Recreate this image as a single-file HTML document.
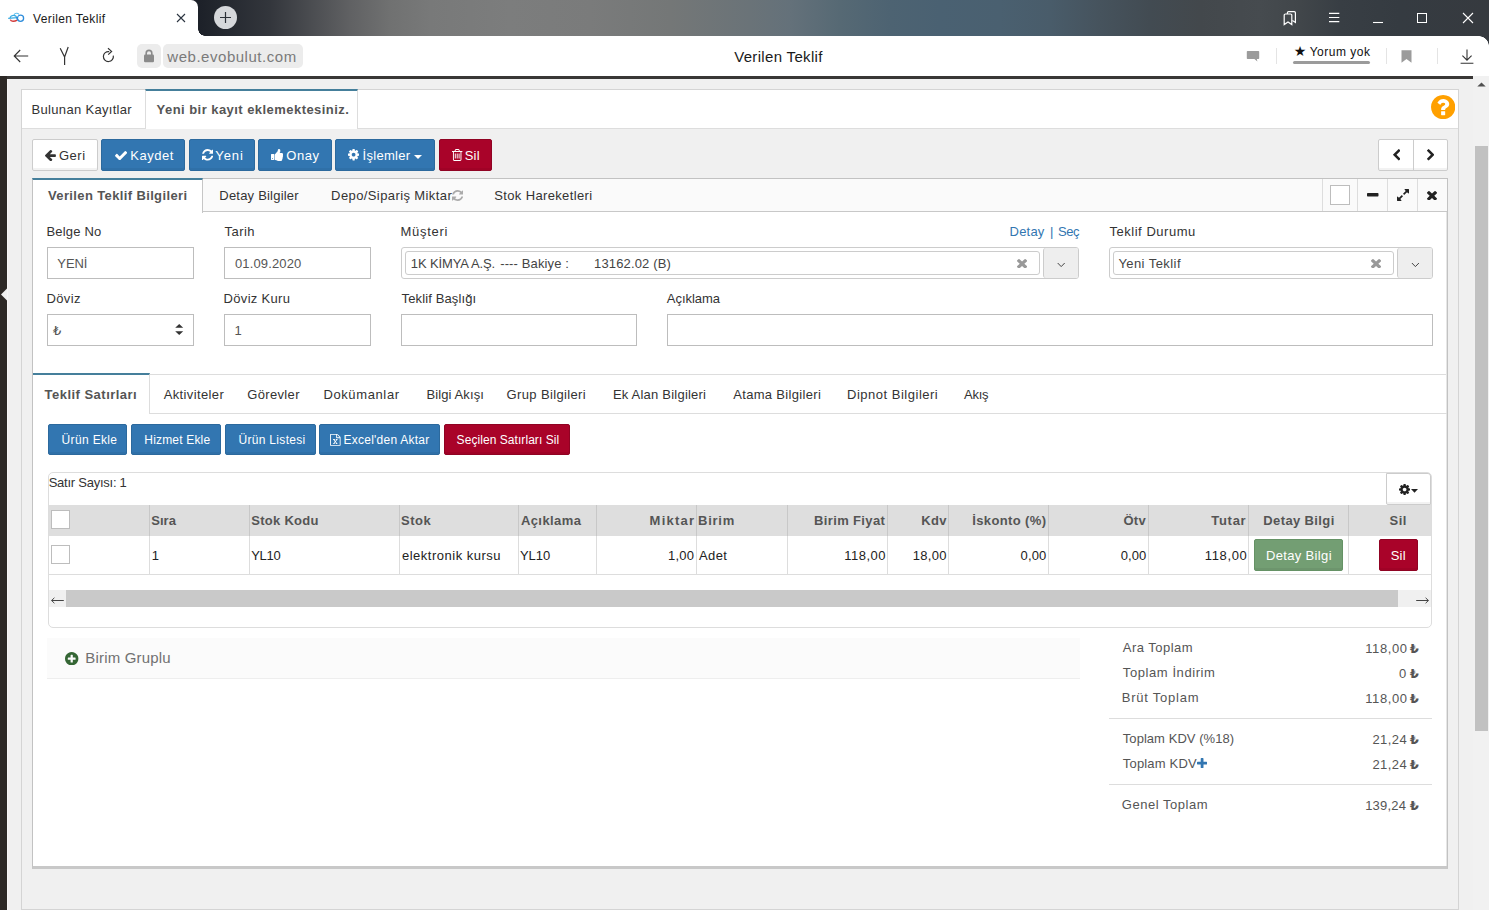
<!DOCTYPE html>
<html lang="tr">
<head>
<meta charset="utf-8">
<title>Verilen Teklif</title>
<style>
*{box-sizing:border-box;margin:0;padding:0}
html,body{width:1489px;height:910px;overflow:hidden}
body{position:relative;font-family:"Liberation Sans","DejaVu Sans",sans-serif;font-size:13px;color:#333;background:#f0f0f0}
.abs{position:absolute}
svg{display:block}
.t{position:absolute;white-space:nowrap;line-height:1}
#titlebar{left:0;top:0;width:1489px;height:36px;background:linear-gradient(90deg,#1d2129 0,#1d2129 200px,#262a31 230px,#33363c 270px,#4a4c50 310px,#606163 350px,#707171 390px,#787979 430px,#7c7d7d 510px,#7a7b7b 590px,#747777 670px,#6a7378 750px,#64717a 790px,#566974 840px,#4d6372 890px,#4a6172 940px,#4a6070 1000px,#495c6a 1050px,#46535d 1100px,#424b52 1150px,#43484c 1200px,#464b4f 1260px,#41464a 1300px,#383e44 1340px,#353b41 1400px,#363a3f 1489px)}
#tab{left:0;top:0;width:198px;height:36px;background:#fff;border-radius:0 7px 0 0}
#tabcurve{left:198px;top:29px;width:7px;height:7px;background:radial-gradient(circle at 100% 0,rgba(255,255,255,0) 6.5px,#fff 7px)}
#addr{left:0;top:36px;width:1489px;height:40px;background:#fff}
#addrcorner{left:1479px;top:36px;width:10px;height:10px;background:radial-gradient(circle at 0 100%,rgba(255,255,255,0) 9.5px,#363a3f 10px)}
.btn{position:absolute;border-radius:2px;box-shadow:inset 0 -2px 0 rgba(0,0,0,0.05)}
.blue{background:#3276b1;border:1px solid #2c699d}
.red{background:#a90329;border:1px solid #900323}
.white{background:#fff;border:1px solid #ccc}
.inp{position:absolute;border:1px solid #bdbdbd;background:#fff}
.sel{position:absolute;border:1px solid #ccc;background:#fff;border-radius:3px}
.th{position:absolute;top:505px;height:31px;background:#dedede;border-left:1px solid #c9c9c9}
.td{position:absolute;top:536px;height:39px;border-left:1px solid #ddd;border-bottom:1px solid #ddd}
.cb{position:absolute;width:19px;height:19px;border:1px solid #bdbdbd;background:#fff}
</style>
</head>
<body>
<div class="abs" id="titlebar"></div><div class="abs" id="tab"></div><div class="abs" id="tabcurve"></div><div class="abs" id="addr"></div><div class="abs" id="addrcorner"></div>
<svg class="abs" style="left:8px;top:11px" width="17" height="13" viewBox="0 0 17 13">
<path d="M6.2 3.9 C6.8 1.9 9.8 1.7 10.9 3.4" fill="none" stroke="#62c0ee" stroke-width="1.1"/>
<path d="M2.3 8.6 C2.9 10.8 6.4 10.7 9.2 9.2" fill="none" stroke="#d23b3b" stroke-width="1.4"/>
<path d="M0.2 7.3 L8.6 6.7 C8.2 4 3.4 3.2 2 6.6" fill="none" stroke="#3aace3" stroke-width="1.2"/>
<ellipse cx="12.5" cy="7.3" rx="3.1" ry="3.1" fill="none" stroke="#2f8ddb" stroke-width="1.3"/>
<path d="M8.4 6.2 C9 7.6 9.6 8.6 10.4 9.4" fill="none" stroke="#2f8ddb" stroke-width="1.1"/>
</svg>
<div class="t" style="left:33.0px;top:13px;font-size:12px;color:#1a1a1a;letter-spacing:0.38px;">Verilen Teklif</div>
<svg class="abs" style="left:176px;top:13px" width="10" height="10" viewBox="0 0 10 10"><path d="M1 1L9 9M9 1L1 9" stroke="#2b3440" stroke-width="1.1" fill="none"/></svg>
<div class="abs" style="left:214px;top:6px;width:23px;height:23px;border-radius:50%;background:#d6d8db"></div>
<svg class="abs" style="left:219px;top:11px" width="13" height="13" viewBox="0 0 13 13"><path d="M6.5 1V12M1 6.5H12" stroke="#2b3038" stroke-width="1.2" fill="none"/></svg>
<svg class="abs" style="left:1282px;top:10px" width="16" height="17" viewBox="0 0 16 17"><path d="M2.2 14.6V5.2a1.2 1.2 0 0 1 1.2-1.2h5.2a1.2 1.2 0 0 1 1.2 1.2v9.4l-3.8-2.6z" fill="none" stroke="#fff" stroke-width="1.2"/><path d="M5.4 4V2.8a1.2 1.2 0 0 1 1.2-1.2h5.6a1.2 1.2 0 0 1 1.2 1.2v9.6l-3-2" fill="none" stroke="#fff" stroke-width="1.2"/></svg>
<svg class="abs" style="left:1328px;top:11px" width="12" height="13" viewBox="0 0 12 13"><path d="M1 2.3H11.3M1 6.5H11.3M1 10.7H11.3" stroke="#fff" stroke-width="1.2"/></svg>
<svg class="abs" style="left:1372px;top:21px" width="12" height="3" viewBox="0 0 12 3"><path d="M1 1.5H11" stroke="#fff" stroke-width="1.1"/></svg>
<svg class="abs" style="left:1416px;top:12px" width="12" height="12" viewBox="0 0 12 12"><rect x="1.5" y="1.5" width="9" height="9" fill="none" stroke="#fff" stroke-width="1"/></svg>
<svg class="abs" style="left:1462px;top:12px" width="12" height="12" viewBox="0 0 12 12"><path d="M1 1L11 11M11 1L1 11" stroke="#fff" stroke-width="1.1"/></svg>
<svg class="abs" style="left:13px;top:49px" width="16" height="14" viewBox="0 0 16 14"><path d="M1.2 7H15.2M7.2 1L1.2 7L7.2 13" stroke="#333" stroke-width="1.1" fill="none"/></svg>
<svg class="abs" style="left:59px;top:46px" width="12" height="20" viewBox="0 0 12 20"><path d="M1.2 2.2L5.6 11L9.2 1M5.6 11V19" stroke="#333" stroke-width="1.2" fill="none"/></svg>
<svg class="abs" style="left:101px;top:47px" width="15" height="17" viewBox="0 0 15 17"><path d="M8.2 4.6A5 5 0 1 0 12.3 8.6" stroke="#333" stroke-width="1.2" fill="none"/><path d="M7 1.2L10.6 4.4L7.2 7.6" stroke="#333" stroke-width="1.2" fill="none"/></svg>
<div class="abs" style="left:137px;top:44px;width:24px;height:24px;border-radius:5px;background:#ececec"></div>
<svg class="abs" style="left:143px;top:49px" width="12" height="14" viewBox="0 0 12 14"><path d="M3.2 6V4.2a2.8 2.8 0 0 1 5.6 0V6" fill="none" stroke="#8a8a8a" stroke-width="1.6"/><rect x="1" y="5.6" width="10" height="7.6" rx="1.2" fill="#8a8a8a"/></svg>
<div class="abs" style="left:163px;top:44px;width:140px;height:24px;border-radius:5px;background:#ececec"></div>
<div class="t" style="left:167.3px;top:49px;font-size:15px;color:#7a7a7a;letter-spacing:0.53px;">web.evobulut.com</div>
<div class="t" style="left:734.2px;top:49px;font-size:15px;color:#1a1a1a;letter-spacing:0.33px;">Verilen Teklif</div>
<svg class="abs" style="left:1246px;top:50px" width="14" height="13" viewBox="0 0 14 13"><path d="M1.6 1h10.8a0.8 0.8 0 0 1 .8.8v6.4a0.8 0.8 0 0 1 -.8.8h-1.6l0.6 2.6l-3-2.6h-6.8a0.8 0.8 0 0 1 -.8-.8v-6.4a0.8 0.8 0 0 1 .8-.8z" fill="#9b9b9b"/></svg>
<div class="abs" style="left:1276px;top:48px;width:1px;height:16px;background:#e4e4e4"></div>
<div class="t" style="left:1293.7px;top:44px;font-size:14px;color:#111;letter-spacing:0.00px;font-family:'DejaVu Sans',sans-serif;">★</div>
<div class="t" style="left:1309.7px;top:46px;font-size:12px;color:#111;letter-spacing:0.50px;">Yorum yok</div>
<div class="abs" style="left:1293px;top:61px;width:77px;height:3px;border-radius:2px;background:#9b9b9b"></div>
<div class="abs" style="left:1386px;top:48px;width:1px;height:16px;background:#e4e4e4"></div>
<svg class="abs" style="left:1401px;top:50px" width="11" height="13" viewBox="0 0 11 13"><path d="M0.5 0.3h10v12.4l-5-3.6l-5 3.6z" fill="#9b9b9b"/></svg>
<div class="abs" style="left:1437px;top:48px;width:1px;height:16px;background:#e4e4e4"></div>
<svg class="abs" style="left:1460px;top:49px" width="14" height="15" viewBox="0 0 14 15"><path d="M7 0.5V11M2.4 6.6L7 11.2L11.6 6.6M0.6 14.2H13.4" stroke="#333" stroke-width="1.1" fill="none"/></svg>
<div class="abs" style="left:0px;top:76px;width:1473px;height:3px;background:#393736"></div>
<div class="abs" style="left:0px;top:76px;width:7px;height:834px;background:#2d2926"></div>
<div class="abs" style="left:1473px;top:76px;width:16px;height:834px;background:#f1f1f1"></div>
<div class="abs" style="left:1475px;top:146px;width:13px;height:585px;background:#c1c1c1"></div>
<svg class="abs" style="left:1477px;top:82px" width="9" height="5" viewBox="0 0 9 5"><path d="M0.3 4.6L4.5 0.4L8.7 4.6z" fill="#505050"/></svg>
<svg class="abs" style="left:0px;top:288px" width="7" height="13" viewBox="0 0 7 13"><path d="M7 0.6L1 6.6L7 12.6z" fill="#f0f0f0"/></svg>
<div class="abs" style="left:7px;top:79px;width:1px;height:831px;background:#f6f6f6"></div>
<div class="abs" style="left:21px;top:89px;width:1438px;height:821px;border:1px solid #d4d4d4;background:#f0f0f0"></div>
<div class="abs" style="left:22px;top:90px;width:1436px;height:39px;background:#fff;border-bottom:1px solid #ddd"></div>
<div class="abs" style="left:145px;top:89px;width:213px;height:40px;background:#fff;border-left:1px solid #ddd;border-right:1px solid #ddd;border-top:2px solid #457f9b"></div>
<div class="t" style="left:31.6px;top:103px;font-size:13px;color:#333;letter-spacing:0.31px;">Bulunan Kayıtlar</div>
<div class="t" style="left:156.6px;top:103px;font-size:13px;font-weight:700;color:#555;letter-spacing:0.45px;">Yeni bir kayıt eklemektesiniz.</div>
<svg class="abs" style="left:1430.8px;top:94.9px" width="24.3" height="24.2" viewBox="128 128 1536 1536" preserveAspectRatio="none"><path d="M1024 1376v-192q0-14-9-23t-23-9h-192q-14 0-23 9t-9 23v192q0 14 9 23t23 9h192q14 0 23-9t9-23zm256-672q0-88-55.500-163t-138.500-116-170-41q-243 0-371 213-15 24 8 42l132 100q7 6 19 6 16 0 25-12 53-68 86-92 34-24 86-24 48 0 85.500 26t37.500 59q0 38-20 61t-68 45q-63 28-115.500 86.500t-52.500 125.500v36q0 14 9 23t23 9h192q14 0 23-9t9-23q0-19 21.500-49.500t54.500-49.500q32-18 49-28.500t46-35 44.500-48 28-60.500 12.500-81zm384 192q0 209-103 385.500t-279.500 279.500-385.500 103-385.500-103-279.500-279.500-103-385.500 103-385.500 279.500-279.500 385.500-103 385.500 103 279.500 279.500 103 385.500z" fill="#ffa000"/></svg>
<div class="btn white" style="left:32px;top:139px;width:66px;height:32px"></div>
<div class="btn blue" style="left:101px;top:139px;width:84px;height:32px"></div>
<div class="btn blue" style="left:189px;top:139px;width:66px;height:32px"></div>
<div class="btn blue" style="left:258px;top:139px;width:74px;height:32px"></div>
<div class="btn blue" style="left:335px;top:139px;width:100px;height:32px"></div>
<div class="btn red" style="left:439px;top:139px;width:53px;height:32px"></div>
<svg class="abs" style="left:45.3px;top:150px" width="10.9" height="11.2" viewBox="192 181 1472 1558" preserveAspectRatio="none"><path d="M1664 896v128q0 53-32.500 90.500t-84.500 37.500h-704l293 294q38 36 38 90t-38 90l-75 76q-37 37-90 37-52 0-91-37l-651-652q-37-37-37-90 0-52 37-91l651-650q38-38 91-38 52 0 90 38l75 74q38 38 38 91t-38 91l-293 293h704q52 0 84.500 37.500t32.500 90.500z" fill="#333"/></svg>
<div class="t" style="left:58.9px;top:149px;font-size:13px;color:#333;letter-spacing:0.57px;">Geri</div>
<svg class="abs" style="left:114.8px;top:150.8px" width="12.2" height="9.4" viewBox="121 334 1550 1188" preserveAspectRatio="none"><path d="M1671 566q0 40-28 68l-724 724-136 136q-28 28-68 28t-68-28l-136-136-362-362q-28-28-28-68t28-68l136-136q28-28 68-28t68 28l294 295 656-657q28-28 68-28t68 28l136 136q28 28 28 68z" fill="#fff"/></svg>
<div class="t" style="left:130.2px;top:149px;font-size:13px;color:#fff;letter-spacing:0.52px;">Kaydet</div>
<svg class="abs" style="left:201.8px;top:149.2px" width="11.4" height="11.6" viewBox="128 128 1536 1536" preserveAspectRatio="none"><path d="M1639 1056q0 5-1 7-64 268-268 434.500t-478 166.500q-146 0-282.500-55t-243.500-157l-129 129q-19 19-45 19t-45-19-19-45v-448q0-26 19-45t45-19h448q26 0 45 19t19 45-19 45l-137 137q71 66 161 102t187 36q134 0 250-65t186-179q11-17 53-117 8-23 30-23h192q13 0 22.500 9.500t9.500 22.500zm25-800v448q0 26-19 45t-45 19h-448q-26 0-45-19t-19-45 19-45l138-138q-148-137-349-137-134 0-250 65t-186 179q-11 17-53 117-8 23-30 23h-199q-13 0-22.500-9.500t-9.500-22.500v-7q65-268 270-434.500t480-166.500q146 0 284 55.500t245 156.500l130-129q19-19 45-19t45 19 19 45z" fill="#fff"/></svg>
<div class="t" style="left:215.3px;top:149px;font-size:13px;color:#fff;letter-spacing:0.90px;">Yeni</div>
<svg class="abs" style="left:270.7px;top:148.6px" width="12.3" height="12" viewBox="128 128 1600 1536" preserveAspectRatio="none"><path d="M384 1344q0-26-19-45t-45-19q-27 0-45.500 19t-18.500 45q0 27 18.500 45.500t45.500 18.500q26 0 45-18.500t19-45.500zm160-512v640q0 26-19 45t-45 19h-288q-26 0-45-19t-19-45v-640q0-26 19-45t45-19h288q26 0 45 19t19 45zm1184 0q0 86-55 149 15 44 15 76 3 76-43 137 17 56 0 117-15 57-54 94 9 112-49 181-64 76-197 78h-129q-66 0-144-15.500t-121.500-29-120.500-39.500q-123-43-158-44-26-1-45-19.500t-19-44.500v-641q0-25 18-43.500t43-20.500q24-2 76-59t101-121q68-87 101-120 18-18 31-48t17.500-48.500 13.500-60.500q7-39 12.500-61t19.500-52 34-50q19-19 45-19 46 0 82.500 10.500t60 26 40 40.500 24 45 12 50 5 45 .5 39q0 38-9.500 76t-19 60-27.500 56q-3 6-10 18t-11 22-8 24h277q78 0 135 57t57 135z" fill="#fff"/></svg>
<div class="t" style="left:286.2px;top:149px;font-size:13px;color:#fff;letter-spacing:0.60px;">Onay</div>
<svg class="abs" style="left:348.3px;top:149.3px" width="11.2" height="11.4" viewBox="128 128 1536 1536" preserveAspectRatio="none"><path d="M1152 896q0-106-75-181t-181-75-181 75-75 181 75 181 181 75 181-75 75-181zm512-109v222q0 12-8 23t-20 13l-185 28q-19 54-39 91 35 50 107 138 10 12 10 25t-9 23q-27 37-99 108t-94 71q-12 0-26-9l-138-108q-44 23-91 38-16 136-29 186-7 28-36 28h-222q-14 0-24.500-8.500t-11.500-21.500l-28-184q-49-16-90-37l-141 107q-10 9-25 9-14 0-25-11-126-114-165-168-7-10-7-23 0-12 8-23 15-21 51-66.500t54-70.500q-27-50-41-99l-183-27q-13-2-21-12.500t-8-23.500v-222q0-12 8-23t19-13l186-28q14-46 39-92-40-57-107-138-10-12-10-24 0-10 9-23 26-36 98.500-107.500t94.500-71.500q13 0 26 10l138 107q44-23 91-38 16-136 29-186 7-28 36-28h222q14 0 24.500 8.500t11.500 21.500l28 184q49 16 90 37l142-107q9-9 24-9 13 0 25 10 129 119 165 170 7 8 7 22 0 12-8 23-15 21-51 66.500t-54 70.500q26 50 41 98l183 28q13 2 21 12.500t8 23.500z" fill="#fff"/></svg>
<div class="t" style="left:362.5px;top:149px;font-size:13px;color:#fff;letter-spacing:0.31px;">İşlemler</div>
<svg class="abs" style="left:414px;top:155px" width="8" height="4" viewBox="0 0 8 4"><path d="M0 0H8L4 4z" fill="#fff"/></svg>
<svg class="abs" style="left:452.3px;top:148.8px" width="10.4" height="12" viewBox="192 128 1408 1536" preserveAspectRatio="none"><path d="M704 736v576q0 14-9 23t-23 9h-64q-14 0-23-9t-9-23v-576q0-14 9-23t23-9h64q14 0 23 9t9 23zm256 0v576q0 14-9 23t-23 9h-64q-14 0-23-9t-9-23v-576q0-14 9-23t23-9h64q14 0 23 9t9 23zm256 0v576q0 14-9 23t-23 9h-64q-14 0-23-9t-9-23v-576q0-14 9-23t23-9h64q14 0 23 9t9 23zm128 724v-948h-896v948q0 22 7 40.500t14.500 27 10.500 8.500h832q3 0 10.500-8.500t14.500-27 7-40.500zm-672-1076h448l-48-117q-7-9-17-11h-317q-10 2-17 11zm928 32v64q0 14-9 23t-23 9h-96v948q0 83-47 143.500t-113 60.500h-832q-66 0-113-58.500t-47-141.500v-952h-96q-14 0-23-9t-9-23v-64q0-14 9-23t23-9h309l70-167q15-37 54-63t79-26h320q40 0 79 26t54 63l70 167h309q14 0 23 9t9 23z" fill="#fff"/></svg>
<div class="t" style="left:464.8px;top:149px;font-size:13px;color:#fff;letter-spacing:0.15px;">Sil</div>
<div class="btn white" style="left:1378px;top:139px;width:70px;height:32px"></div>
<div class="abs" style="left:1413px;top:140px;width:1px;height:30px;background:#ccc"></div>
<svg class="abs" style="left:1392.9px;top:149.2px" width="7.4" height="11.5" viewBox="410 26 1036 1612" preserveAspectRatio="none"><path d="M1427 301l-531 531 531 531q19 19 19 45t-19 45l-166 166q-19 19-45 19t-45-19l-742-742q-19-19-19-45t19-45l742-742q19-19 45-19t45 19l166 166q19 19 19 45t-19 45z" fill="#222"/></svg>
<svg class="abs" style="left:1426.5px;top:149.2px" width="7.4" height="11.5" viewBox="346 26 1036 1612" preserveAspectRatio="none"><path d="M1363 877l-742 742q-19 19-45 19t-45-19l-166-166q-19-19-19-45t19-45l531-531-531-531q-19-19-19-45t19-45l166-166q19-19 45-19t45 19l742 742q19 19 19 45t-19 45z" fill="#222"/></svg>
<div class="abs" style="left:32px;top:178px;width:1416px;height:691px;background:#fff;border:1px solid #c2c2c2;border-bottom:3px solid #c8c8c8;border-right:1px solid #c2c2c2"></div>
<div class="abs" style="left:1446px;top:212px;width:1px;height:654px;background:#e6e6e6"></div>
<div class="abs" style="left:33px;top:179px;width:1414px;height:33px;background:#fafafa;border-bottom:1px solid #c8c8c8"></div>
<div class="abs" style="left:32px;top:178px;width:171px;height:35px;background:#fff;border-left:1px solid #c2c2c2;border-right:1px solid #c6c6c6;border-top:2px solid #457f9b"></div>
<div class="t" style="left:48.0px;top:189px;font-size:13px;font-weight:700;color:#555;letter-spacing:0.37px;">Verilen Teklif Bilgileri</div>
<div class="t" style="left:219.3px;top:189px;font-size:13px;color:#333;letter-spacing:0.21px;">Detay Bilgiler</div>
<div class="t" style="left:331.1px;top:189px;font-size:13px;color:#333;letter-spacing:0.40px;">Depo/Sipariş Miktar</div>
<svg class="abs" style="left:451.5px;top:190px" width="11.4" height="11" viewBox="128 128 1536 1536" preserveAspectRatio="none"><path d="M1639 1056q0 5-1 7-64 268-268 434.500t-478 166.500q-146 0-282.500-55t-243.500-157l-129 129q-19 19-45 19t-45-19-19-45v-448q0-26 19-45t45-19h448q26 0 45 19t19 45-19 45l-137 137q71 66 161 102t187 36q134 0 250-65t186-179q11-17 53-117 8-23 30-23h192q13 0 22.500 9.500t9.500 22.500zm25-800v448q0 26-19 45t-45 19h-448q-26 0-45-19t-19-45 19-45l138-138q-148-137-349-137-134 0-250 65t-186 179q-11 17-53 117-8 23-30 23h-199q-13 0-22.500-9.500t-9.500-22.500v-7q65-268 270-434.500t480-166.500q146 0 284 55.500t245 156.500l130-129q19-19 45-19t45 19 19 45z" fill="#aaa"/></svg>
<div class="t" style="left:494.3px;top:189px;font-size:13px;color:#333;letter-spacing:0.35px;">Stok Hareketleri</div>
<div class="abs" style="left:1322px;top:179px;width:1px;height:32px;background:#ddd"></div>
<div class="abs" style="left:1357px;top:179px;width:1px;height:32px;background:#ddd"></div>
<div class="abs" style="left:1387px;top:179px;width:1px;height:32px;background:#ddd"></div>
<div class="abs" style="left:1417px;top:179px;width:1px;height:32px;background:#ddd"></div>
<div class="abs" style="left:1330px;top:185px;width:20px;height:20px;background:#fff;border:1px solid #bdbdbd"></div>
<svg class="abs" style="left:1367px;top:193.2px" width="11.5" height="3.4" viewBox="192 640 1408 384" preserveAspectRatio="none"><path d="M1600 736v192q0 40-28 68t-68 28h-1216q-40 0-68-28t-28-68v-192q0-40 28-68t68-28h1216q40 0 68 28t28 68z" fill="#222"/></svg>
<svg class="abs" style="left:1396.5px;top:189px" width="12" height="12" viewBox="128 128 1536 1536" preserveAspectRatio="none"><path d="M883 1056q0 13-10 23l-332 332 144 144q19 19 19 45t-19 45-45 19h-448q-26 0-45-19t-19-45v-448q0-26 19-45t45-19 45 19l144 144 332-332q10-10 23-10t23 10l114 114q10 10 10 23zm781-864v448q0 26-19 45t-45 19-45-19l-144-144-332 332q-10 10-23 10t-23-10l-114-114q-10-10-10-23t10-23l332-332-144-144q-19-19-19-45t19-45 45-19h448q26 0 45 19t19 45z" fill="#222"/></svg>
<svg class="abs" style="left:1427.4px;top:190.6px" width="10" height="9.6" viewBox="302 366 1188 1188" preserveAspectRatio="none"><path d="M1490 1322q0 40-28 68l-136 136q-28 28-68 28t-68-28l-294-294-294 294q-28 28-68 28t-68-28l-136-136q-28-28-28-68t28-68l294-294-294-294q-28-28-28-68t28-68l136-136q28-28 68-28t68 28l294 294 294-294q28-28 68-28t68 28l136 136q28 28 28 68t-28 68l-294 294 294 294q28 28 28 68z" fill="#222"/></svg>
<div class="t" style="left:46.4px;top:225px;font-size:13px;color:#333;letter-spacing:0.20px;">Belge No</div>
<div class="t" style="left:224.6px;top:225px;font-size:13px;color:#333;letter-spacing:0.45px;">Tarih</div>
<div class="t" style="left:400.6px;top:225px;font-size:13px;color:#333;letter-spacing:0.70px;">Müşteri</div>
<div class="t" style="left:1009.6px;top:225px;font-size:13px;color:#3276b1;letter-spacing:0.20px;">Detay</div>
<div class="t" style="left:1050.0px;top:225px;font-size:13px;color:#3276b1;letter-spacing:0.00px;">|</div>
<div class="t" style="left:1057.9px;top:225px;font-size:13px;color:#3276b1;letter-spacing:-0.35px;">Seç</div>
<div class="t" style="left:1109.4px;top:225px;font-size:13px;color:#333;letter-spacing:0.54px;">Teklif Durumu</div>
<div class="inp" style="left:47px;top:247px;width:147px;height:32px"></div>
<div class="inp" style="left:224px;top:247px;width:147px;height:32px"></div>
<div class="t" style="left:57.3px;top:257px;font-size:13px;color:#555;letter-spacing:-0.07px;">YENİ</div>
<div class="t" style="left:235.0px;top:257px;font-size:13px;color:#555;letter-spacing:0.14px;">01.09.2020</div>
<div class="sel" style="left:401px;top:247px;width:678px;height:32px"></div>
<div class="sel" style="left:405px;top:251px;width:635px;height:24px"></div>
<div class="abs" style="left:1043px;top:248px;width:35px;height:30px;background:#eee;border-left:1px solid #ccc;border-radius:3px 2px 2px 3px"></div>
<div class="t" style="left:410.8px;top:257px;font-size:13px;color:#444;letter-spacing:-0.12px;">1K KİMYA A.Ş.</div>
<div class="t" style="left:500.2px;top:257px;font-size:13px;color:#444;letter-spacing:0.13px;">---- Bakiye :</div>
<div class="t" style="left:594.0px;top:257px;font-size:13px;color:#444;letter-spacing:0.15px;">13162.02 (B)</div>
<svg class="abs" style="left:1017px;top:258.7px" width="10.1" height="9.5" viewBox="302 366 1188 1188" preserveAspectRatio="none"><path d="M1490 1322q0 40-28 68l-136 136q-28 28-68 28t-68-28l-294-294-294 294q-28 28-68 28t-68-28l-136-136q-28-28-28-68t28-68l294-294-294-294q-28-28-28-68t28-68l136-136q28-28 68-28t68 28l294 294 294-294q28-28 68-28t68 28l136 136q28 28 28 68t-28 68l-294 294 294 294q28 28 28 68z" fill="#999"/></svg>
<svg class="abs" style="left:1057px;top:262px" width="9" height="6" viewBox="0 0 9 6"><path d="M0.7 1L4.2 4.6L7.7 1" stroke="#444" stroke-width="1" fill="none"/></svg>
<div class="sel" style="left:1109px;top:247px;width:324px;height:32px"></div>
<div class="sel" style="left:1113px;top:251px;width:281px;height:24px"></div>
<div class="abs" style="left:1397px;top:248px;width:35px;height:30px;background:#eee;border-left:1px solid #ccc;border-radius:3px 2px 2px 3px"></div>
<div class="t" style="left:1118.4px;top:257px;font-size:13px;color:#444;letter-spacing:0.43px;">Yeni Teklif</div>
<svg class="abs" style="left:1371px;top:258.7px" width="10.1" height="9.5" viewBox="302 366 1188 1188" preserveAspectRatio="none"><path d="M1490 1322q0 40-28 68l-136 136q-28 28-68 28t-68-28l-294-294-294 294q-28 28-68 28t-68-28l-136-136q-28-28-28-68t28-68l294-294-294-294q-28-28-28-68t28-68l136-136q28-28 68-28t68 28l294 294 294-294q28-28 68-28t68 28l136 136q28 28 28 68t-28 68l-294 294 294 294q28 28 28 68z" fill="#999"/></svg>
<svg class="abs" style="left:1411px;top:262px" width="9" height="6" viewBox="0 0 9 6"><path d="M0.9 1L4.4 4.6L7.9 1" stroke="#444" stroke-width="1" fill="none"/></svg>
<div class="t" style="left:46.4px;top:292px;font-size:13px;color:#333;letter-spacing:0.40px;">Döviz</div>
<div class="t" style="left:223.6px;top:292px;font-size:13px;color:#333;letter-spacing:0.31px;">Döviz Kuru</div>
<div class="t" style="left:401.6px;top:292px;font-size:13px;color:#333;letter-spacing:0.12px;">Teklif Başlığı</div>
<div class="t" style="left:666.8px;top:292px;font-size:13px;color:#333;letter-spacing:-0.04px;">Açıklama</div>
<div class="inp" style="left:47px;top:314px;width:147px;height:32px"></div>
<div class="inp" style="left:224px;top:314px;width:147px;height:32px"></div>
<div class="inp" style="left:401px;top:314px;width:236px;height:32px"></div>
<div class="inp" style="left:667px;top:314px;width:766px;height:32px"></div>
<div class="t" style="left:53.0px;top:324px;font-size:13px;color:#555;letter-spacing:0.00px;">₺</div>
<svg class="abs" style="left:175px;top:324px" width="9" height="11" viewBox="0 0 9 11"><path d="M0.2 3.8H8.2L4.2 0z M0.2 7.3H8.2L4.2 11z" fill="#333"/></svg>
<div class="t" style="left:234.5px;top:324px;font-size:13px;color:#555;letter-spacing:0.00px;">1</div>
<div class="abs" style="left:33px;top:374px;width:1413px;height:1px;background:#ddd"></div>
<div class="abs" style="left:149px;top:413px;width:1298px;height:1px;background:#ddd"></div>
<div class="abs" style="left:33px;top:373px;width:117px;height:41px;background:#fff;border-right:1px solid #ddd;border-top:2px solid #457f9b"></div>
<div class="t" style="left:44.5px;top:388px;font-size:13px;font-weight:700;color:#555;letter-spacing:0.48px;">Teklif Satırları</div>
<div class="t" style="left:163.7px;top:388px;font-size:13px;color:#333;letter-spacing:0.37px;">Aktiviteler</div>
<div class="t" style="left:247.3px;top:388px;font-size:13px;color:#333;letter-spacing:0.33px;">Görevler</div>
<div class="t" style="left:323.4px;top:388px;font-size:13px;color:#333;letter-spacing:0.62px;">Dokümanlar</div>
<div class="t" style="left:426.4px;top:388px;font-size:13px;color:#333;letter-spacing:0.12px;">Bilgi Akışı</div>
<div class="t" style="left:506.6px;top:388px;font-size:13px;color:#333;letter-spacing:0.36px;">Grup Bilgileri</div>
<div class="t" style="left:612.9px;top:388px;font-size:13px;color:#333;letter-spacing:0.22px;">Ek Alan Bilgileri</div>
<div class="t" style="left:733.2px;top:388px;font-size:13px;color:#333;letter-spacing:0.33px;">Atama Bilgileri</div>
<div class="t" style="left:847.0px;top:388px;font-size:13px;color:#333;letter-spacing:0.51px;">Dipnot Bilgileri</div>
<div class="t" style="left:964.0px;top:388px;font-size:13px;color:#333;letter-spacing:-0.27px;">Akış</div>
<div class="btn blue" style="left:48px;top:424px;width:79px;height:31px"></div>
<div class="btn blue" style="left:131px;top:424px;width:90px;height:31px"></div>
<div class="btn blue" style="left:225px;top:424px;width:91px;height:31px"></div>
<div class="btn blue" style="left:319px;top:424px;width:121px;height:31px"></div>
<div class="btn red" style="left:444px;top:424px;width:126px;height:31px"></div>
<div class="t" style="left:61.6px;top:434px;font-size:12px;color:#fff;letter-spacing:0.34px;">Ürün Ekle</div>
<div class="t" style="left:144.3px;top:434px;font-size:12px;color:#fff;letter-spacing:0.18px;">Hizmet Ekle</div>
<div class="t" style="left:238.4px;top:434px;font-size:12px;color:#fff;letter-spacing:0.32px;">Ürün Listesi</div>
<svg class="abs" style="left:330.2px;top:434px" width="10.6" height="11.8" viewBox="128 0 1536 1792" preserveAspectRatio="none"><path d="M1596 380q28 28 48 76t20 88v1152q0 40-28 68t-68 28h-1344q-40 0-68-28t-28-68v-1600q0-40 28-68t68-28h896q40 0 88 20t76 48zm-444-244v376h376q-10-29-22-41l-313-313q-12-12-41-22zm384 1528v-1024h-416q-40 0-68-28t-28-68v-416h-768v1536h1280zm-979-234v106h281v-106h-75l103-161q5-7 10-16.500t7.500-13.500 3.500-4h2q1 4 5 10 2 4 4.500 7.500t6 8 6.500 8.500l107 161h-76v106h291v-106h-68l-192-273 195-282h67v-107h-279v107h74l-103 159q-4 7-10 16.500t-9 13.500l-2 3h-2q-1-4-5-10-6-11-17-23l-106-159h76v-107h-290v107h68l189 272-194 283h-68z" fill="#fff"/></svg>
<div class="t" style="left:343.5px;top:434px;font-size:12px;color:#fff;letter-spacing:0.24px;">Excel'den Aktar</div>
<div class="t" style="left:456.6px;top:434px;font-size:12px;color:#fff;letter-spacing:0.06px;">Seçilen Satırları Sil</div>
<div class="abs" style="left:48px;top:472px;width:1384px;height:156px;border:1px solid #ddd;border-radius:5px;background:#fff"></div>
<div class="t" style="left:48.7px;top:476px;font-size:13px;color:#333;letter-spacing:-0.25px;">Satır Sayısı: 1</div>
<div class="btn white" style="left:1386px;top:473px;width:45px;height:32px;border-radius:0 3px 0 2px"></div>
<svg class="abs" style="left:1398.8px;top:484px" width="11.2" height="11" viewBox="128 128 1536 1536" preserveAspectRatio="none"><path d="M1152 896q0-106-75-181t-181-75-181 75-75 181 75 181 181 75 181-75 75-181zm512-109v222q0 12-8 23t-20 13l-185 28q-19 54-39 91 35 50 107 138 10 12 10 25t-9 23q-27 37-99 108t-94 71q-12 0-26-9l-138-108q-44 23-91 38-16 136-29 186-7 28-36 28h-222q-14 0-24.500-8.500t-11.500-21.500l-28-184q-49-16-90-37l-141 107q-10 9-25 9-14 0-25-11-126-114-165-168-7-10-7-23 0-12 8-23 15-21 51-66.500t54-70.500q-27-50-41-99l-183-27q-13-2-21-12.500t-8-23.500v-222q0-12 8-23t19-13l186-28q14-46 39-92-40-57-107-138-10-12-10-24 0-10 9-23 26-36 98.500-107.500t94.500-71.500q13 0 26 10l138 107q44-23 91-38 16-136 29-186 7-28 36-28h222q14 0 24.500 8.500t11.500 21.500l28 184q49 16 90 37l142-107q9-9 24-9 13 0 25 10 129 119 165 170 7 8 7 22 0 12-8 23-15 21-51 66.500t-54 70.500q26 50 41 98l183 28q13 2 21 12.500t8 23.500z" fill="#222"/></svg>
<svg class="abs" style="left:1411px;top:489px" width="7" height="4" viewBox="0 0 7 4"><path d="M0 0H7L3.5 3.8z" fill="#222"/></svg>
<div class="abs" style="left:49px;top:505px;width:1382px;height:31px;background:#dedede"></div>
<div class="abs" style="left:149px;top:505px;width:1px;height:31px;background:#c8c8c8"></div>
<div class="abs" style="left:149px;top:536px;width:1px;height:38px;background:#ddd"></div>
<div class="abs" style="left:249px;top:505px;width:1px;height:31px;background:#c8c8c8"></div>
<div class="abs" style="left:249px;top:536px;width:1px;height:38px;background:#ddd"></div>
<div class="abs" style="left:399px;top:505px;width:1px;height:31px;background:#c8c8c8"></div>
<div class="abs" style="left:399px;top:536px;width:1px;height:38px;background:#ddd"></div>
<div class="abs" style="left:518px;top:505px;width:1px;height:31px;background:#c8c8c8"></div>
<div class="abs" style="left:518px;top:536px;width:1px;height:38px;background:#ddd"></div>
<div class="abs" style="left:596px;top:505px;width:1px;height:31px;background:#c8c8c8"></div>
<div class="abs" style="left:596px;top:536px;width:1px;height:38px;background:#ddd"></div>
<div class="abs" style="left:696px;top:505px;width:1px;height:31px;background:#c8c8c8"></div>
<div class="abs" style="left:696px;top:536px;width:1px;height:38px;background:#ddd"></div>
<div class="abs" style="left:787px;top:505px;width:1px;height:31px;background:#c8c8c8"></div>
<div class="abs" style="left:787px;top:536px;width:1px;height:38px;background:#ddd"></div>
<div class="abs" style="left:887px;top:505px;width:1px;height:31px;background:#c8c8c8"></div>
<div class="abs" style="left:887px;top:536px;width:1px;height:38px;background:#ddd"></div>
<div class="abs" style="left:948px;top:505px;width:1px;height:31px;background:#c8c8c8"></div>
<div class="abs" style="left:948px;top:536px;width:1px;height:38px;background:#ddd"></div>
<div class="abs" style="left:1048px;top:505px;width:1px;height:31px;background:#c8c8c8"></div>
<div class="abs" style="left:1048px;top:536px;width:1px;height:38px;background:#ddd"></div>
<div class="abs" style="left:1148px;top:505px;width:1px;height:31px;background:#c8c8c8"></div>
<div class="abs" style="left:1148px;top:536px;width:1px;height:38px;background:#ddd"></div>
<div class="abs" style="left:1248px;top:505px;width:1px;height:31px;background:#c8c8c8"></div>
<div class="abs" style="left:1248px;top:536px;width:1px;height:38px;background:#ddd"></div>
<div class="abs" style="left:1348px;top:505px;width:1px;height:31px;background:#c8c8c8"></div>
<div class="abs" style="left:1348px;top:536px;width:1px;height:38px;background:#ddd"></div>
<div class="abs" style="left:49px;top:574px;width:1382px;height:1px;background:#ddd"></div>
<div class="cb" style="left:51px;top:510px"></div>
<div class="cb" style="left:51px;top:545px"></div>
<div class="t" style="left:151.2px;top:514px;font-size:13px;font-weight:700;color:#555;letter-spacing:0.07px;">Sıra</div>
<div class="t" style="left:251.2px;top:514px;font-size:13px;font-weight:700;color:#555;letter-spacing:0.29px;">Stok Kodu</div>
<div class="t" style="left:401.0px;top:514px;font-size:13px;font-weight:700;color:#555;letter-spacing:0.53px;">Stok</div>
<div class="t" style="left:520.9px;top:514px;font-size:13px;font-weight:700;color:#555;letter-spacing:0.43px;">Açıklama</div>
<div class="t" style="left:649.6px;top:514px;font-size:13px;font-weight:700;color:#555;letter-spacing:1.22px;">Miktar</div>
<div class="t" style="left:698.0px;top:514px;font-size:13px;font-weight:700;color:#555;letter-spacing:0.75px;">Birim</div>
<div class="t" style="left:814.0px;top:514px;font-size:13px;font-weight:700;color:#555;letter-spacing:0.37px;">Birim Fiyat</div>
<div class="t" style="left:921.2px;top:514px;font-size:13px;font-weight:700;color:#555;letter-spacing:0.35px;">Kdv</div>
<div class="t" style="left:972.2px;top:514px;font-size:13px;font-weight:700;color:#555;letter-spacing:0.38px;">İskonto (%)</div>
<div class="t" style="left:1123.5px;top:514px;font-size:13px;font-weight:700;color:#555;letter-spacing:0.25px;">Ötv</div>
<div class="t" style="left:1211.3px;top:514px;font-size:13px;font-weight:700;color:#555;letter-spacing:0.70px;">Tutar</div>
<div class="t" style="left:1263.3px;top:514px;font-size:13px;font-weight:700;color:#555;letter-spacing:0.38px;">Detay Bilgi</div>
<div class="t" style="left:1389.5px;top:514px;font-size:13px;font-weight:700;color:#555;letter-spacing:0.50px;">Sil</div>
<div class="t" style="left:151.8px;top:549px;font-size:13px;color:#222;letter-spacing:0.00px;">1</div>
<div class="t" style="left:251.2px;top:549px;font-size:13px;color:#222;letter-spacing:-0.27px;">YL10</div>
<div class="t" style="left:402.0px;top:549px;font-size:13px;color:#222;letter-spacing:0.50px;">elektronik kursu</div>
<div class="t" style="left:519.9px;top:549px;font-size:13px;color:#222;letter-spacing:0.00px;">YL10</div>
<div class="t" style="left:668.1px;top:549px;font-size:13px;color:#222;letter-spacing:0.20px;">1,00</div>
<div class="t" style="left:699.0px;top:549px;font-size:13px;color:#222;letter-spacing:0.40px;">Adet</div>
<div class="t" style="left:844.2px;top:549px;font-size:13px;color:#222;letter-spacing:0.50px;">118,00</div>
<div class="t" style="left:912.7px;top:549px;font-size:13px;color:#222;letter-spacing:0.30px;">18,00</div>
<div class="t" style="left:1020.6px;top:549px;font-size:13px;color:#222;letter-spacing:0.13px;">0,00</div>
<div class="t" style="left:1120.7px;top:549px;font-size:13px;color:#222;letter-spacing:0.10px;">0,00</div>
<div class="t" style="left:1204.8px;top:549px;font-size:13px;color:#222;letter-spacing:0.64px;">118,00</div>
<div class="btn" style="left:1254px;top:539px;width:89px;height:32px;background:#739e73;border:1px solid #659265"></div>
<div class="t" style="left:1266.0px;top:549px;font-size:13px;color:#fff;letter-spacing:0.34px;">Detay Bilgi</div>
<div class="btn red" style="left:1379px;top:539px;width:39px;height:32px"></div>
<div class="t" style="left:1390.7px;top:549px;font-size:13px;color:#fff;letter-spacing:0.20px;">Sil</div>
<div class="abs" style="left:49px;top:590px;width:1382px;height:17px;background:#f0f0f0"></div>
<div class="abs" style="left:66px;top:590px;width:1332px;height:17px;background:#c9c9c9"></div>
<svg class="abs" style="left:51px;top:596px" width="13" height="9" viewBox="0 0 13 9"><path d="M0.6 4.5H12.8M3.4 1.8L0.6 4.5L3.4 7.2" stroke="#444" stroke-width="1" fill="none"/></svg>
<svg class="abs" style="left:1416px;top:596px" width="13" height="9" viewBox="0 0 13 9"><path d="M0.2 4.5H12.4M9.6 1.8L12.4 4.5L9.6 7.2" stroke="#444" stroke-width="1" fill="none"/></svg>
<div class="abs" style="left:47px;top:638px;width:1033px;height:41px;background:#fbfbfb;border-bottom:1px solid #eeeeee"></div>
<svg class="abs" style="left:65.2px;top:652px" width="13.4" height="13.4" viewBox="128 128 1536 1536" preserveAspectRatio="none"><path d="M1344 960v-128q0-26-19-45t-45-19h-256v-256q0-26-19-45t-45-19h-128q-26 0-45 19t-19 45v256h-256q-26 0-45 19t-19 45v128q0 26 19 45t45 19h256v256q0 26 19 45t45 19h128q26 0 45-19t19-45v-256h256q26 0 45-19t19-45zm320-64q0 209-103 385.500t-279.500 279.500-385.500 103-385.500-103-279.500-279.500-103-385.500 103-385.500 279.500-279.500 385.500-103 385.500 103 279.500 279.500 103 385.500z" fill="#356635"/></svg>
<div class="t" style="left:85.3px;top:650px;font-size:15px;color:#717171;letter-spacing:0.17px;">Birim Gruplu</div>
<div class="t" style="left:1122.8px;top:641px;font-size:13px;color:#555;letter-spacing:0.48px;">Ara Toplam</div>
<div class="t" style="left:1122.8px;top:666px;font-size:13px;color:#555;letter-spacing:0.58px;">Toplam İndirim</div>
<div class="t" style="left:1121.8px;top:691px;font-size:13px;color:#555;letter-spacing:0.76px;">Brüt Toplam</div>
<div class="t" style="left:1122.8px;top:732px;font-size:13px;color:#555;letter-spacing:0.05px;">Toplam KDV (%18)</div>
<div class="t" style="left:1122.8px;top:757px;font-size:13px;color:#555;letter-spacing:0.18px;">Toplam KDV</div>
<svg class="abs" style="left:1197px;top:758.2px" width="10.2" height="10.2" viewBox="192 128 1408 1408" preserveAspectRatio="none"><path d="M1600 736v192q0 40-28 68t-68 28h-416v416q0 40-28 68t-68 28h-192q-40 0-68-28t-28-68v-416h-416q-40 0-68-28t-28-68v-192q0-40 28-68t68-28h416v-416q0-40 28-68t68-28h192q40 0 68 28t28 68v416h416q40 0 68 28t28 68z" fill="#3276b1"/></svg>
<div class="t" style="left:1121.8px;top:798px;font-size:13px;color:#555;letter-spacing:0.53px;">Genel Toplam</div>
<div class="t" style="left:1365.2px;top:642px;font-size:13px;color:#555;letter-spacing:0.60px;">118,00</div>
<div class="t" style="left:1409.7px;top:642px;font-size:13px;font-weight:700;color:#555;letter-spacing:0.00px;">₺</div>
<div class="t" style="left:1399.0px;top:667px;font-size:13px;color:#555;letter-spacing:0.00px;">0</div>
<div class="t" style="left:1409.7px;top:667px;font-size:13px;font-weight:700;color:#555;letter-spacing:0.00px;">₺</div>
<div class="t" style="left:1365.2px;top:692px;font-size:13px;color:#555;letter-spacing:0.60px;">118,00</div>
<div class="t" style="left:1409.7px;top:692px;font-size:13px;font-weight:700;color:#555;letter-spacing:0.00px;">₺</div>
<div class="t" style="left:1372.4px;top:733px;font-size:13px;color:#555;letter-spacing:0.45px;">21,24</div>
<div class="t" style="left:1409.7px;top:733px;font-size:13px;font-weight:700;color:#555;letter-spacing:0.00px;">₺</div>
<div class="t" style="left:1372.4px;top:758px;font-size:13px;color:#555;letter-spacing:0.45px;">21,24</div>
<div class="t" style="left:1409.7px;top:758px;font-size:13px;font-weight:700;color:#555;letter-spacing:0.00px;">₺</div>
<div class="t" style="left:1365.2px;top:799px;font-size:13px;color:#555;letter-spacing:0.20px;">139,24</div>
<div class="t" style="left:1409.7px;top:799px;font-size:13px;font-weight:700;color:#555;letter-spacing:0.00px;">₺</div>
<div class="abs" style="left:1109px;top:718px;width:323px;height:1px;background:#ddd"></div>
<div class="abs" style="left:1109px;top:784px;width:323px;height:1px;background:#ddd"></div>
</body>
</html>
